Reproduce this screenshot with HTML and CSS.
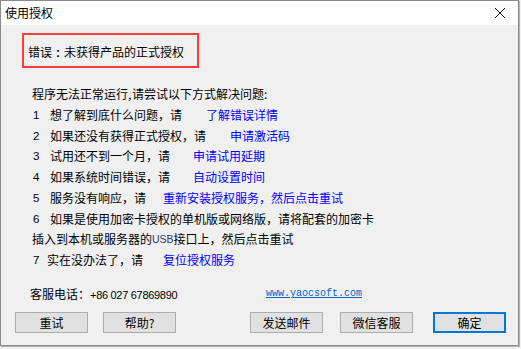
FILE: index.html
```html
<!DOCTYPE html>
<html lang="zh-CN">
<head>
<meta charset="utf-8">
<title>使用授权</title>
<link rel="stylesheet" href="styles.css">
</head>
<body>
<div class="window">
  <div class="titlebar">
    <span class="title">使用授权</span>
    <svg class="close" width="12" height="12" viewBox="0 0 12 12"><path d="M1 1 L11 11 M11 1 L1 11" stroke="#111" stroke-width="1" fill="none"/></svg>
  </div>
  <div class="content">
    <div class="error-box">错误<span class="colon">:</span>未获得产品的正式授权</div>
    <div class="lines">
      <div class="line">程序无法正常运行<span class="half">,</span>请尝试以下方式解决问题<span class="half">:</span></div>
      <div class="line item"><span class="num">1</span><span>想了解到底什么问题，请</span><a class="link g25">了解错误详情</a></div>
      <div class="line item"><span class="num">2</span><span>如果还没有获得正式授权，请</span><a class="link g25">申请激活码</a></div>
      <div class="line item"><span class="num">3</span><span>试用还不到一个月，请</span><a class="link g24">申请试用延期</a></div>
      <div class="line item"><span class="num">4</span><span>如果系统时间错误，请</span><a class="link g24">自动设置时间</a></div>
      <div class="line item"><span class="num">5</span><span>服务没有响应，请</span><a class="link g18">重新安装授权服务，然后点击重试</a></div>
      <div class="line item"><span class="num">6</span><span>如果是使用加密卡授权的单机版或网络版，请将配套的加密卡</span></div>
      <div class="line">插入到本机或服务器的<span class="usb">USB</span>接口上，然后点击重试</div>
      <div class="line item"><span class="num n7">7</span><span>实在没办法了，请</span><a class="link g21">复位授权服务</a></div>
    </div>
    <div class="contact">
      <span class="phone-label">客服电话：<span class="phone">+86 027 67869890</span></span>
      <a class="site">www.yaocsoft.com</a>
    </div>
    <div class="buttons">
      <button class="btn">重试</button>
      <button class="btn b-help">帮助?</button>
      <button class="btn b-mail">发送邮件</button>
      <button class="btn b-wx">微信客服</button>
      <button class="btn b-ok">确定</button>
    </div>
  </div>
</div>
</body>
</html>
```

FILE: styles.css
```css
html, body {
  margin: 0;
  padding: 0;
  background: #f0f0f0;
}
body {
  font-family: "Noto Sans CJK SC", "Noto Sans", sans-serif;
  font-size: 12px;
  color: #000;
  width: 521px;
  height: 349px;
  overflow: hidden;
}
.window {
  width: 517px;
  height: 344px;
  border: 1px solid #8a8a8a;
  box-shadow: 1px 1px 0 #b5b5b5;
  background: #f0f0f0;
  display: flex;
  flex-direction: column;
}
.titlebar {
  height: 24px;
  background: #fff;
  display: flex;
  align-items: center;
  justify-content: space-between;
  padding: 0 12px 0 4px;
}
.title {
  font-size: 12px;
  color: #000;
  line-height: 24px;
}
.close {
  display: block;
}
.content {
  flex: 1;
  padding: 8px 0 0 21px;
}
.error-box {
  width: 169px;
  height: 31px;
  border: 2px solid #ff3c3c;
  padding: 0 0 0 4px;
  line-height: 34px;
  font-size: 12px;
  white-space: nowrap;
}
.colon {
  display: inline-block;
  width: 12px;
  text-align: center;
  font-family: "Liberation Sans", Arial, sans-serif;
  font-weight: bold;
}
.lines {
  margin-top: 16px;
  padding-left: 10px;
}
.line {
  height: 20.75px;
  line-height: 20.75px;
  white-space: nowrap;
  display: flex;
  align-items: center;
}
.half {
  display: inline-block;
  width: 4px;
}
.num {
  font-family: "Liberation Sans", Arial, sans-serif;
  font-size: 11.5px;
  width: 18px;
  padding-left: 1px;
  box-sizing: border-box;
}
.n7 {
  width: 15px;
}
.link {
  color: #0000ff;
}
.g25 { margin-left: 24px; }
.g24 { margin-left: 23px; }
.g18 { margin-left: 17px; }
.g21 { margin-left: 20px; }
.usb {
  font-family: "Liberation Sans", Arial, sans-serif;
  font-size: 10.5px;
  color: #2a3a6a;
}
.contact {
  margin-top: 13px;
  padding-left: 8px;
  display: flex;
  align-items: center;
  height: 20px;
  white-space: nowrap;
}
.phone-label {
  width: 236px;
}
.phone {
  font-family: "Liberation Sans", Arial, sans-serif;
  font-size: 11px;
  letter-spacing: -0.3px;
}
.site {
  font-family: "Liberation Mono", "Courier New", monospace;
  font-size: 10px;
  color: #0066cc;
  text-decoration: underline;
}
.buttons {
  display: flex;
  margin-top: 8px;
  margin-left: -7px;
}
.btn {
  width: 73px;
  height: 21px;
  padding: 0;
  margin: 0;
  background: #e1e1e1;
  border: 1px solid #adadad;
  font-family: "Noto Sans CJK SC", "Noto Sans", sans-serif;
  font-size: 12px;
  color: #000;
  line-height: 19px;
}
.b-help { margin-left: 15px; }
.b-mail { margin-left: 74px; }
.b-wx { margin-left: 17px; }
.b-ok {
  margin-left: 20px;
  border: 2px solid #0078d7;
  line-height: 17px;
}
```
